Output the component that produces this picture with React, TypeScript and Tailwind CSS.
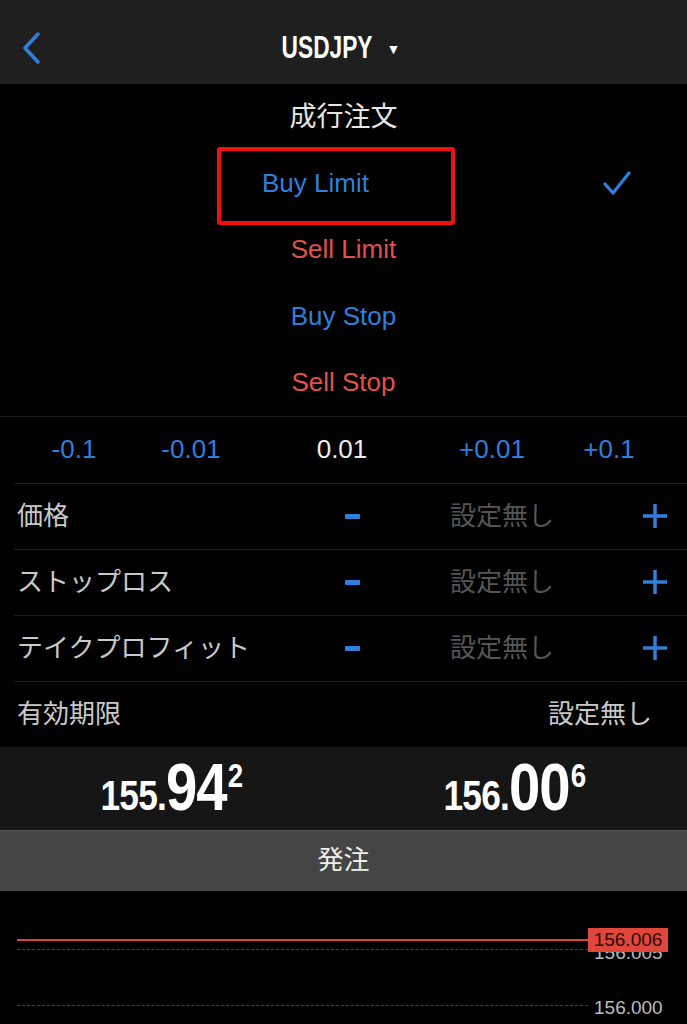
import React from "react";

const jp = { fontFamily: '"Helvetica Neue", "Liberation Sans", "Noto Sans CJK JP", sans-serif' };
const cond = { fontFamily: '"Liberation Sans", sans-serif' };

function Minus() {
  return <div className="w-[15px] h-[5px] bg-[#2f7fdc] rounded-[1px]" />;
}
function Plus() {
  return (
    <svg width="26" height="26" viewBox="0 0 26 26">
      <path d="M13 1v24M1 13h24" stroke="#2f7fdc" strokeWidth="3.5" />
    </svg>
  );
}

function ParamRow({ label }: { label: string }) {
  return (
    <div className="flex items-center h-[66px] border-t border-[#1c1c1c] ml-[14px]">
      <div className="w-[308px] pl-[3px] text-[26px] text-[#c9c9c9]">{label}</div>
      <div className="w-[60px] flex justify-center"><Minus /></div>
      <div className="ml-[68px] text-[26px] text-[#555]">設定無し</div>
      <div className="flex-1" />
      <div className="w-[40px] flex justify-center mr-[12px]"><Plus /></div>
    </div>
  );
}

function Price({ a, b, c }: { a: string; b: string; c: string }) {
  return (
    <div className="flex justify-center items-baseline pt-[4px] scale-x-[0.84]">
      <span className="text-[42px] tracking-[-1px]">{a}</span>
      <span className="text-[67px] leading-none tracking-[-1px]">{b}</span>
      <span className="text-[33px] self-start -mt-[2px] ml-[1px]">{c}</span>
    </div>
  );
}

export default function App() {
  const rowCls = "h-[66.4px] flex items-center justify-center text-[26px]";
  return (
    <div className="w-[687px] h-[1024px] bg-black overflow-hidden" style={jp}>
      {/* header */}
      <div className="h-[84px] bg-[#1f1f1f] relative flex items-center justify-center">
        <svg className="absolute left-[20px] top-[32px]" width="22" height="32" viewBox="0 0 22 32">
          <path d="M18 2L5 16l13 14" stroke="#2f7fdc" strokeWidth="3.5" fill="none" strokeLinecap="round" strokeLinejoin="round" />
        </svg>
        <div className="flex items-center gap-[14px] text-white pr-[6px] mt-[10px]">
          <span className="inline-block text-[32px] font-bold scale-x-[0.71] -mx-[18px]" style={cond}>USDJPY</span>
          <span className="text-[14px] mt-[4px]">▼</span>
        </div>
      </div>

      {/* order types */}
      <div>
        <div className={rowCls + " text-[#e6e6e6] text-[27px]"}>成行注文</div>
        <div className={rowCls + " relative"}>
          <div className="absolute left-[217px] top-[-3px] w-[238px] h-[78px] border-[4px] border-[#f01010] rounded-[3px]" />
          <span className="absolute left-[262px] text-[#2f7fdc]">Buy Limit</span>
          <svg className="absolute left-[603px] top-[21px]" width="28" height="25" viewBox="0 0 28 25">
            <path d="M2 13l8 9L26 2" stroke="#2f7fdc" strokeWidth="3.2" fill="none" strokeLinecap="round" strokeLinejoin="round" />
          </svg>
        </div>
        <div className={rowCls + " text-[#e2524a]"}>Sell Limit</div>
        <div className={rowCls + " text-[#2f7fdc]"}>Buy Stop</div>
        <div className={rowCls + " text-[#e2524a]"}>Sell Stop</div>
      </div>

      {/* step row */}
      <div className="h-[67px] border-t border-[#1c1c1c] flex items-center text-[26px] pl-[24px]">
        <div className="w-[100px] text-center text-[#2f7fdc]">-0.1</div>
        <div className="w-[100px] ml-[17px] text-center text-[#2f7fdc]">-0.01</div>
        <div className="w-[100px] ml-[51px] text-center text-[#eeeeee]">0.01</div>
        <div className="w-[100px] ml-[50px] text-center text-[#2f7fdc]">+0.01</div>
        <div className="w-[100px] ml-[17px] text-center text-[#2f7fdc]">+0.1</div>
      </div>

      <ParamRow label="価格" />
      <ParamRow label="ストップロス" />
      <ParamRow label="テイクプロフィット" />
      <div className="flex items-center justify-between h-[66px] border-t border-[#1c1c1c] ml-[14px] pl-[3px] pr-[35px] text-[26px] text-[#c9c9c9]">
        <span>有効期限</span>
        <span>設定無し</span>
      </div>

      {/* prices */}
      <div className="h-[83px] bg-[#161616] flex items-center text-white font-bold" style={cond}>
        <div className="w-[343px] flex justify-center">
          <Price a="155." b="94" c="2" />
        </div>
        <div className="w-[344px] flex justify-center">
          <Price a="156." b="00" c="6" />
        </div>
      </div>

      {/* order button */}
      <div className="h-[61px] bg-[#454545] border-t border-[#555] flex items-center justify-center text-[26px] text-[#eeeeee]">
        発注
      </div>

      {/* chart */}
      <div className="relative h-[133px]">
        <div className="absolute left-[17px] top-[58px] w-[571px] border-t border-dashed border-[#444]" />
        <div className="absolute left-[594px] top-[48px] text-[19px] text-[#bbbbbb]" style={cond}>156.005</div>
        <div className="absolute left-[17px] top-[48px] w-[571px] h-[2px] bg-[#d9443a]" />
        <div className="absolute left-[588px] top-[37px] w-[80px] h-[24px] bg-[#e0473a] flex items-center justify-center text-[19px] text-[#2a0a08]" style={cond}>156.006</div>
        <div className="absolute left-[17px] top-[114px] w-[571px] border-t border-dashed border-[#444]" />
        <div className="absolute left-[594px] top-[103px] text-[19px] text-[#bbbbbb]" style={cond}>156.000</div>
      </div>
    </div>
  );
}
